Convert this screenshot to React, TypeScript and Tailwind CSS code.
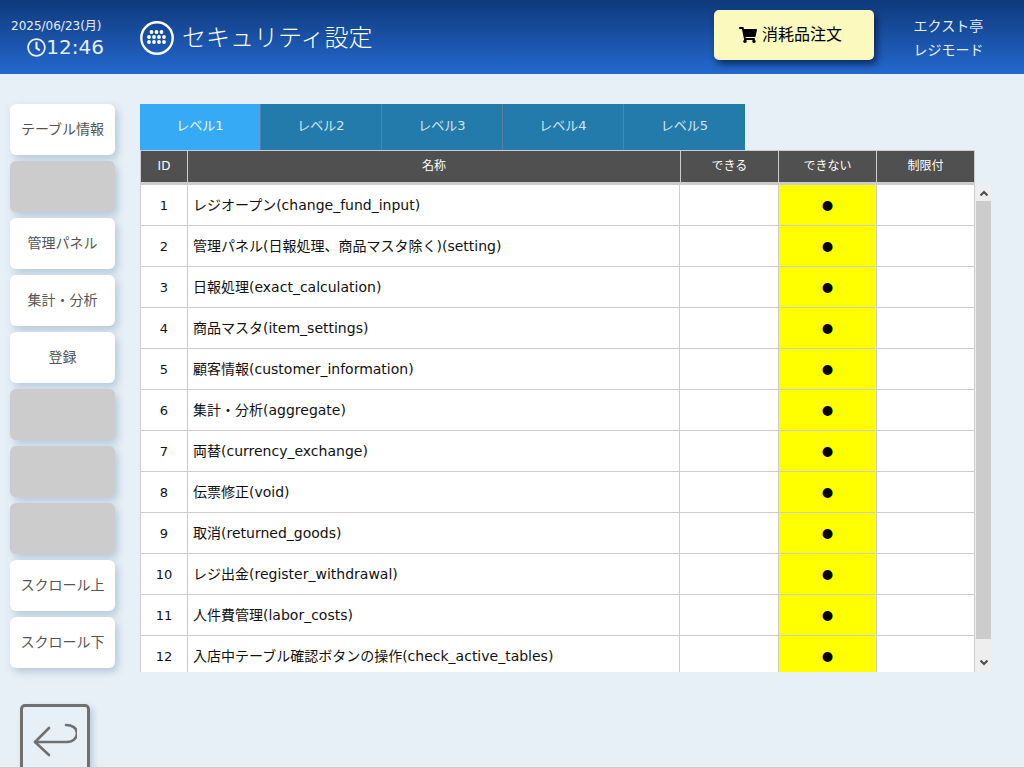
import { FaShoppingCart, FaRegClock } from "react-icons/fa";

const rows: [number, string][] = [
  [1, "レジオープン(change_fund_input)"],
  [2, "管理パネル(日報処理、商品マスタ除く)(setting)"],
  [3, "日報処理(exact_calculation)"],
  [4, "商品マスタ(item_settings)"],
  [5, "顧客情報(customer_information)"],
  [6, "集計・分析(aggregate)"],
  [7, "両替(currency_exchange)"],
  [8, "伝票修正(void)"],
  [9, "取消(returned_goods)"],
  [10, "レジ出金(register_withdrawal)"],
  [11, "人件費管理(labor_costs)"],
  [12, "入店中テーブル確認ボタンの操作(check_active_tables)"],
];

const side = ["テーブル情報", "", "管理パネル", "集計・分析", "登録", "", "", "", "スクロール上", "スクロール下"];
const tabs = ["レベル1", "レベル2", "レベル3", "レベル4", "レベル5"];

function GridIcon() {
  const dots: [number, number][] = [];
  [[-1, 0, 1], [-1.5, -0.5, 0.5, 1.5], [-1.5, -0.5, 0.5, 1.5]].forEach((r, y) =>
    r.forEach((x) => dots.push([16.5 + x * 5, 11 + y * 5]))
  );
  return (
    <svg width="34" height="34" viewBox="0 0 34 34" className="shrink-0">
      <circle cx="17" cy="17" r="15.7" fill="none" stroke="#fff" strokeWidth="2.4" />
      {dots.map(([x, y], i) => (
        <circle key={i} cx={x} cy={y} r="1.9" fill="#fff" />
      ))}
    </svg>
  );
}

export default function App() {
  return (
    <div className="relative h-[768px] w-[1024px] overflow-hidden bg-[#e8f0f7] font-['DejaVu_Sans','Noto_Sans_CJK_JP',sans-serif]">
      <header className="flex h-[74px] items-start bg-gradient-to-b from-[#0f3a7c] to-[#2469cf] text-white">
        <div className="ml-[11px] flex w-[93px] flex-col items-end pt-[17px]">
          <div className="w-full whitespace-nowrap text-[12px] leading-[18px] text-[#e6eefc]">2025/06/23(月)</div>
          <div className="flex items-center text-[20px] leading-[24px] text-[#e6eefc]">
            <FaRegClock className="text-[19px]" />
            <span>12:46</span>
          </div>
        </div>
        <div className="ml-[36px] mt-[20px] flex items-center gap-[8px]">
          <GridIcon />
          <span className="pt-[1px] text-[24px] font-light leading-[34px]">セキュリティ設定</span>
        </div>
        <button className="ml-[341px] mt-[10px] flex h-[50px] w-[160px] items-center justify-center gap-[5px] rounded-[5px] bg-[#fbf9bd] pr-[6px] text-[16px] text-black shadow-[3px_4px_7px_rgba(0,20,60,0.7)]">
          <FaShoppingCart className="text-[18px]" />
          <span>消耗品注文</span>
        </button>
        <div className="ml-[40px] mt-[14px] text-[14px] leading-[24px] text-[#e6eefc]">
          <div>エクスト亭</div>
          <div>レジモード</div>
        </div>
      </header>

      <div className="flex pt-[30px]">
        <nav className="ml-[10px] flex w-[105px] flex-col gap-[6px]">
          {side.map((s, i) => (
            <button
              key={i}
              className={`flex h-[51px] items-center justify-center rounded-[6px] text-[14px] text-[#555] shadow-[3px_4px_8px_rgba(120,150,180,0.45)] ${s ? "bg-white" : "bg-[#ccc]"}`}
            >
              {s}
            </button>
          ))}
          <button className="ml-[10px] mt-[30px] flex h-[80px] w-[70px] shrink-0 items-start justify-center rounded-[5px] border-[3px] border-[#707070] pt-[15px] shadow-[3px_3px_6px_rgba(120,150,180,0.4)]">
            <svg width="44" height="36" viewBox="0 0 44 36" fill="none" stroke="#707070" strokeWidth="2.6" strokeLinecap="round" strokeLinejoin="round">
              <path d="M16 6 L2 20 L16 33" />
              <path d="M2 20 H34 C40 20 44 16 44 11 C44 6 39 3 33 3" />
            </svg>
          </button>
        </nav>

        <main className="ml-[25px] flex flex-col">
          <div className="flex h-[46px] w-[605px]">
            {tabs.map((t, i) => (
              <div
                key={t}
                className={`flex items-center justify-center pb-[3px] text-[13px] ${i === 0 ? "w-[120px] bg-[#36aaf4] text-[#f0f8ff]" : `border-l border-[#5a7fa3] bg-[#227bab] text-[#d5e6f2] ${i === 4 ? "w-[122px]" : "w-[121px]"}`}`}
              >
                {t}
              </div>
            ))}
          </div>

          <div className="flex w-[852px]">
            <div className="w-[835px] shrink-0">
              <div className="flex h-[35px] border border-b-[3px] border-[#ccc] bg-[#505050] text-[12px] text-white">
                <div className="flex w-[46px] items-center justify-center pb-[2px]">ID</div>
                <div className="flex w-[493px] items-center justify-center border-l border-[#ccc] pb-[2px]">名称</div>
                <div className="flex w-[98px] items-center justify-center border-l border-[#ccc] pb-[2px]">できる</div>
                <div className="flex w-[98px] items-center justify-center border-l border-[#ccc] pb-[2px]">できない</div>
                <div className="flex flex-1 items-center justify-center border-l border-[#ccc] pb-[2px]">制限付</div>
              </div>
              <div className="h-[487px] overflow-hidden">
                {rows.map(([id, name]) => (
                  <div key={id} className="flex h-[41px] border-x border-b border-[#ccc] bg-white text-[14px] text-[#111]">
                    <div className="flex w-[46px] items-center justify-center pt-[1px] text-[13px]">{id}</div>
                    <div className="flex w-[492px] items-center whitespace-nowrap border-l border-[#ccc] pt-[1px] pl-[5px]">{name}</div>
                    <div className="w-[99px] border-l border-[#ccc]" />
                    <div className="flex w-[98px] items-center justify-center border-l border-[#ccc] bg-[#ffff00] font-['Noto_Sans_CJK_JP',sans-serif] text-[11px] text-black">●</div>
                    <div className="flex-1 border-l border-[#ccc]" />
                  </div>
                ))}
              </div>
            </div>
            <div className="ml-[1px] mt-[34px] flex h-[488px] w-[15px] flex-col bg-[#eee]">
              <div className="flex h-[17px] items-center justify-center">
                <svg width="8" height="6" viewBox="0 0 8 6" fill="none" stroke="#505050" strokeWidth="2.2"><path d="M0.5 5.5 L4 2 L7.5 5.5" /></svg>
              </div>
              <div className="h-[438px] bg-[#ccc]" />
              <div className="flex flex-1 items-end justify-center pb-[6px]">
                <svg width="8" height="6" viewBox="0 0 8 6" fill="none" stroke="#505050" strokeWidth="2.2"><path d="M0.5 0.5 L4 4 L7.5 0.5" /></svg>
              </div>
            </div>
          </div>
        </main>
      </div>
      <div className="absolute bottom-0 left-0 h-[1px] w-full bg-[#ccc]" />
    </div>
  );
}
